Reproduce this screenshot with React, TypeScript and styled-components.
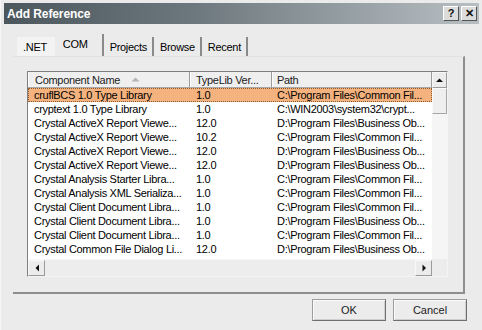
import React from "react";
import styled, { createGlobalStyle } from "styled-components";

const GlobalStyle = createGlobalStyle`
  html, body {
    margin: 0;
    padding: 0;
    background: #ebebeb;
  }
  body {
    font-family: "Liberation Sans", Arial, sans-serif;
    font-size: 11px;
    letter-spacing: -0.3px;
    color: #000;
  }
`;

const Window = styled.div`
  width: 482px;
  height: 330px;
  box-sizing: border-box;
  padding: 3px;
  background: #ebebeb;
  border-left: 1px solid #f6f6f6;
  display: flex;
  flex-direction: column;
  overflow: hidden;
`;

const TitleBar = styled.div`
  height: 21px;
  display: flex;
  align-items: center;
  justify-content: space-between;
  padding: 0 2px 0 3px;
  background: linear-gradient(to right, #4c575d 0%, #6d787e 40%, #b8bfc3 100%);
`;

const Title = styled.span`
  color: #fff;
  font-weight: bold;
  font-size: 12px;
  letter-spacing: -0.1px;
`;

const TitleButtons = styled.div`
  display: flex;
  gap: 2px;
`;

const TitleButton = styled.div`
  width: 16px;
  height: 15px;
  box-sizing: border-box;
  background: #dcdcdc;
  border: 1px solid;
  border-color: #fff #555 #555 #fff;
  display: flex;
  align-items: center;
  justify-content: center;
  font-weight: bold;
  font-size: 11px;
  letter-spacing: 0;
  line-height: 1;
  color: #111;
`;

const Content = styled.div`
  flex: 1;
  display: flex;
  flex-direction: column;
  padding: 10px 14px 0 12px;
`;

const TabStrip = styled.div`
  display: flex;
  align-items: flex-end;
  height: 22px;
  padding-left: 1px;
`;

const Tab = styled.div<{ $active?: boolean; $light?: boolean; $sep?: boolean }>`
  height: ${(p) => (p.$active ? "22px" : "19px")};
  box-sizing: border-box;
  display: flex;
  align-items: ${(p) => (p.$active ? "flex-start" : "center")};
  padding: ${(p) =>
    p.$active ? "4px 14px 0 8px" : p.$light ? "0 8px 0 6px" : "0 5px 0 4px"};
  background: ${(p) => (p.$light ? "#f3f3f3" : "transparent")};
  border-right: ${(p) => (p.$sep ? "2px solid #8a8a8a" : "0")};
  margin-right: ${(p) => (p.$sep ? "2px" : "0")};
`;

const TabPanel = styled.div`
  height: 238px;
  box-sizing: border-box;
  border-right: 2px solid #8e8e8e;
  border-bottom: 2px solid #8e8e8e;
  border-top: 1px solid #e2e2e2;
  margin-left: -3px;
  padding: 14px 14px 0 14px;
`;

const ListView = styled.div`
  width: 421px;
  height: 206px;
  box-sizing: border-box;
  border: 1px solid;
  border-color: #7f7f7f #f4f4f4 #f4f4f4 #7f7f7f;
  display: grid;
  grid-template-columns: 404px 15px;
  grid-template-rows: 16px 171px 17px;
  background: #fff;
`;

const Header = styled.div`
  display: grid;
  grid-template-columns: 162px 82px 1fr;
  background: #efefef;
  border-bottom: 1px solid #a8a8a8;
  box-sizing: border-box;
`;

const HeaderCell = styled.div<{ $pad?: number }>`
  display: flex;
  align-items: center;
  padding-left: ${(p) => p.$pad ?? 6}px;
  border-right: 1px solid #9c9c9c;
  box-shadow: inset 1px 0 0 #fff;
  white-space: nowrap;
  overflow: hidden;
  color: #222;
`;

const SortArrow = styled.svg`
  margin-left: 11px;
`;

const Rows = styled.div`
  overflow: hidden;
  background: #fff;
`;

const Row = styled.div<{ $selected?: boolean }>`
  display: grid;
  grid-template-columns: 162px 82px 1fr;
  height: 14px;
  align-items: center;
  box-sizing: border-box;
  background: ${(p) => (p.$selected ? "#f4b27e" : "transparent")};
  outline: ${(p) => (p.$selected ? "1px dotted #8a5a30" : "none")};
  outline-offset: -1px;
`;

const Cell = styled.div<{ $pad?: number }>`
  padding-left: ${(p) => p.$pad ?? 6}px;
  white-space: nowrap;
  overflow: hidden;
  line-height: 14px;
`;

const VScroll = styled.div`
  grid-row: 1 / 3;
  grid-column: 2;
  display: flex;
  flex-direction: column;
  background: #f5f5f5;
`;

const ScrollButton = styled.div<{ $w?: number; $h?: number }>`
  width: ${(p) => p.$w ?? 15}px;
  height: ${(p) => p.$h ?? 16}px;
  box-sizing: border-box;
  background: #ececec;
  border: 1px solid;
  border-color: #f8f8f8 #9a9a9a #9a9a9a #f8f8f8;
  display: flex;
  align-items: center;
  justify-content: center;
  flex-shrink: 0;
`;

const Thumb = styled.div`
  height: 26px;
  box-sizing: border-box;
  background: #efefef;
  border: 1px solid;
  border-color: #fafafa #a6a6a6 #a6a6a6 #fafafa;
`;

const HScroll = styled.div`
  display: flex;
  background: #ededed;
  border-top: 1px solid #f6f6f6;
`;

const HTrack = styled.div`
  flex: 1;
`;

const Corner = styled.div`
  background: #ececec;
`;

const ButtonRow = styled.div`
  display: flex;
  justify-content: flex-end;
  gap: 7px;
  padding-top: 5px;
  margin-right: -2px;
`;

const DialogButton = styled.button`
  width: 74px;
  height: 22px;
  box-sizing: border-box;
  background: #ececec;
  border: 1px solid;
  border-color: #9d9d9d #6f6f6f #6f6f6f #9d9d9d;
  box-shadow: inset 1px 1px 0 #fafafa, inset -1px -1px 0 #cfcfcf;
  font-family: "Liberation Sans", Arial, sans-serif;
  font-size: 11px;
  color: #222;
  padding: 0;
`;

const rows: [string, string, string][] = [
  ["cruflBCS 1.0 Type Library", "1.0", "C:\\Program Files\\Common Fil..."],
  ["cryptext 1.0 Type Library", "1.0", "C:\\WIN2003\\system32\\crypt..."],
  ["Crystal ActiveX Report Viewe...", "12.0", "D:\\Program Files\\Business Ob..."],
  ["Crystal ActiveX Report Viewe...", "10.2", "C:\\Program Files\\Common Fil..."],
  ["Crystal ActiveX Report Viewe...", "12.0", "D:\\Program Files\\Business Ob..."],
  ["Crystal ActiveX Report Viewe...", "12.0", "D:\\Program Files\\Business Ob..."],
  ["Crystal Analysis Starter Libra...", "1.0", "C:\\Program Files\\Common Fil..."],
  ["Crystal Analysis XML Serializa...", "1.0", "C:\\Program Files\\Common Fil..."],
  ["Crystal Client Document Libra...", "1.0", "C:\\Program Files\\Common Fil..."],
  ["Crystal Client Document Libra...", "1.0", "D:\\Program Files\\Business Ob..."],
  ["Crystal Client Document Libra...", "1.0", "C:\\Program Files\\Common Fil..."],
  ["Crystal Common File Dialog Li...", "12.0", "D:\\Program Files\\Business Ob..."],
  ["Crystal Common File Dialog Li...", "10.2", "C:\\Program Files\\Common Fil..."],
];

const Arrow = ({ dir }: { dir: "up" | "left" | "right" }) => {
  const pts =
    dir === "up" ? "1,5 8,5 4.5,1.5" : dir === "left" ? "5,0.5 5,7.5 1.5,4" : "1.5,0.5 1.5,7.5 5,4";
  const w = dir === "up" ? 9 : 6;
  const h = dir === "up" ? 6 : 8;
  return (
    <svg width={w} height={h} viewBox={`0 0 ${w} ${h}`}>
      <polygon points={pts} fill="#111" />
    </svg>
  );
};

export default function App() {
  return (
    <>
      <GlobalStyle />
      <Window>
        <TitleBar>
          <Title>Add Reference</Title>
          <TitleButtons>
            <TitleButton>?</TitleButton>
            <TitleButton>✕</TitleButton>
          </TitleButtons>
        </TitleBar>
        <Content>
          <TabStrip>
            <Tab $light>.NET</Tab>
            <Tab $active $sep>COM</Tab>
            <Tab $sep>Projects</Tab>
            <Tab $sep>Browse</Tab>
            <Tab $sep>Recent</Tab>
          </TabStrip>
          <TabPanel>
            <ListView>
              <Header>
                <HeaderCell $pad={7}>
                  Component Name
                  <SortArrow width="9" height="5" viewBox="0 0 9 5">
                    <polygon points="0.5,4.5 8.5,4.5 4.5,0.5" fill="#b4b4b4" />
                  </SortArrow>
                </HeaderCell>
                <HeaderCell>TypeLib Ver...</HeaderCell>
                <HeaderCell $pad={5}>Path</HeaderCell>
              </Header>
              <VScroll>
                <ScrollButton>
                  <Arrow dir="up" />
                </ScrollButton>
                <Thumb />
              </VScroll>
              <Rows>
                {rows.map(([name, ver, path], i) => (
                  <Row key={i} $selected={i === 0}>
                    <Cell>{name}</Cell>
                    <Cell>{ver}</Cell>
                    <Cell $pad={5}>{path}</Cell>
                  </Row>
                ))}
              </Rows>
              <HScroll>
                <ScrollButton $w={17}>
                  <Arrow dir="left" />
                </ScrollButton>
                <HTrack />
                <ScrollButton $w={17}>
                  <Arrow dir="right" />
                </ScrollButton>
              </HScroll>
              <Corner />
            </ListView>
          </TabPanel>
          <ButtonRow>
            <DialogButton>OK</DialogButton>
            <DialogButton>Cancel</DialogButton>
          </ButtonRow>
        </Content>
      </Window>
    </>
  );
}
